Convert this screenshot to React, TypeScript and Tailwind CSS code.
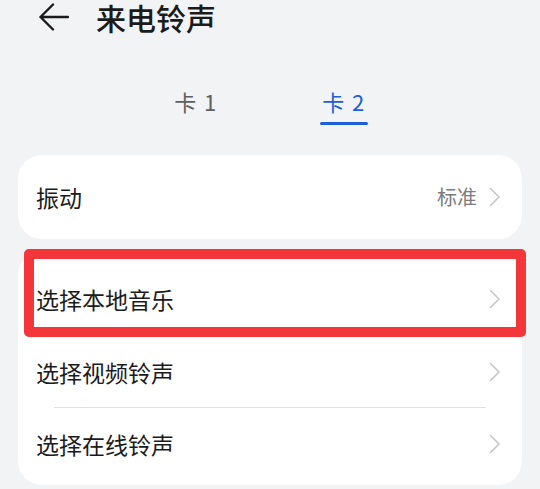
import type { ReactNode } from "react";

const FONT = { fontFamily: '"Noto Sans CJK SC", "Noto Sans", sans-serif' };

function Chevron() {
  return (
    <svg width="12" height="20" viewBox="0 0 12 20" fill="none" aria-hidden="true">
      <path d="M1.5 1.5 L10 10 L1.5 18.5" stroke="#c6c6c6" strokeWidth="1.6" strokeLinecap="round" strokeLinejoin="round" />
    </svg>
  );
}

function Row({ label, value, className = "" }: { label: string; value?: string; className?: string }) {
  return (
    <div className={`flex items-center justify-between pl-[18px] pr-[21px] ${className}`}>
      <span className="text-[23px] leading-[28px] text-[#1b1b1b]">{label}</span>
      <div className="flex items-center gap-[12px]">
        {value ? <span className="text-[20px] leading-[24px] text-[#7b7b7b]">{value}</span> : null}
        <Chevron />
      </div>
    </div>
  );
}

function Tab({ children, active }: { children: ReactNode; active?: boolean }) {
  return (
    <div className="flex w-[48px] flex-col items-center">
      <span className={`whitespace-nowrap text-[22px] leading-[22px] tracking-[1.5px] ${active ? "text-[#1c5fd8]" : "text-[#5f5f5f]"}`}>{children}</span>
      <div className={`mt-[10px] h-[3px] w-[48px] rounded-full ${active ? "bg-[#1c5fd8]" : "bg-transparent"}`} />
    </div>
  );
}

export default function App() {
  return (
    <div className="h-[489px] w-[540px] overflow-hidden bg-[#f1f3f5]" style={FONT}>
      <header className="flex h-[34px] items-center pl-[39px]">
        <svg width="30" height="28" viewBox="0 0 30 28" fill="none" aria-hidden="true">
          <path d="M14 1.5 L1.5 14 L14 26.5 M1.5 14 H29" stroke="#1b1b1b" strokeWidth="2.4" strokeLinecap="round" strokeLinejoin="round" />
        </svg>
        <h1 className="ml-[27px] text-[30px] font-medium leading-[34px] text-[#1b1b1b]">来电铃声</h1>
      </header>

      <div className="mt-[56px] flex justify-center gap-[100px]">
        <Tab>卡 1</Tab>
        <Tab active>卡 2</Tab>
      </div>

      <section className="mx-[18px] mt-[30px] rounded-[24px] bg-white">
        <Row label="振动" value="标准" className="h-[84px]" />
      </section>

      <section className="relative mx-[18px] mt-[12px] rounded-[24px] bg-white pb-[5px] pt-[12px]">
        <Row label="选择本地音乐" className="h-[72px]" />
        <div className="mx-[36px] h-px bg-[#e6e6e6]" />
        <Row label="选择视频铃声" className="h-[71px]" />
        <div className="mx-[36px] h-px bg-[#e2e2e2]" />
        <Row label="选择在线铃声" className="h-[72px]" />
        <div className="absolute left-[6px] right-[-4px] top-[-2px] h-[88px] rounded-[5px] border-[10px] border-[#f2363a]" />
      </section>
    </div>
  );
}
